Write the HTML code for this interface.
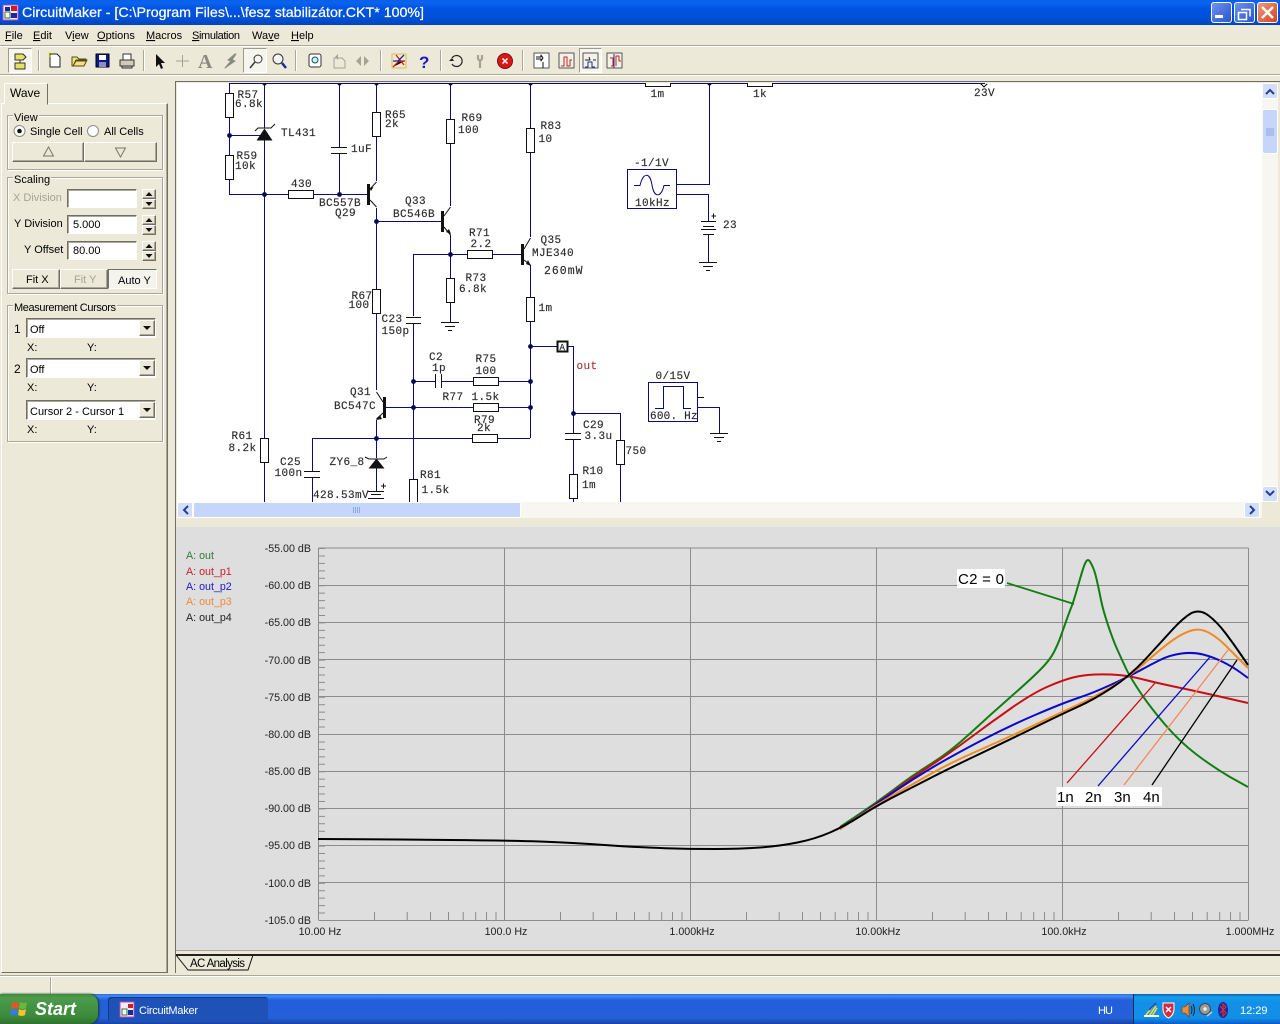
<!DOCTYPE html>
<html><head><meta charset="utf-8"><title>CircuitMaker</title>
<style>
html,body{margin:0;padding:0;width:1280px;height:1024px;overflow:hidden;background:#ece9d8}
.b{position:absolute;box-sizing:border-box}
.grp{border:1px solid #aca899;box-shadow:1px 1px 0 #fff,inset 1px 1px 0 #fff}
.btn{background:#ece9d8;border:1px solid;border-color:#fff #716f64 #716f64 #fff;box-shadow:inset -1px -1px 0 #aca899}
.inp{background:#fff;border:1px solid;border-color:#716f64 #fff #fff #716f64;box-shadow:inset 1px 1px 0 #aca899}
svg{position:absolute;left:0;top:0}
text{font-family:"Liberation Sans",sans-serif;font-size:11px;fill:#000;white-space:pre}
.m text{font-family:"Liberation Mono",monospace;font-size:11px;letter-spacing:.4px;fill:#2a2a2a;stroke:#2a2a2a;stroke-width:.15}
.w{fill:none;stroke:#0b0b80;stroke-width:1;shape-rendering:crispEdges}
.k{fill:none;stroke:#111;stroke-width:1;shape-rendering:crispEdges}
.r{fill:#fff;stroke:#111;stroke-width:1;shape-rendering:crispEdges}
.c{fill:none;stroke-width:2;stroke-linejoin:round}
.a{fill:none;stroke-width:1.3}
.g text{font-size:10.7px;fill:#222}
.gy{fill:#a5a397}
</style></head><body>

<!-- Title bar -->
<div class="b" style="left:0;top:0;width:1280px;height:25px;background:linear-gradient(#0a5fe8 0,#0a63ee 3px,#0054e3 8px,#0050d8 18px,#0046c0 24px)"></div>
<!-- Window buttons -->
<div class="b" style="left:1211px;top:2px;width:21px;height:21px;border:1px solid #fff;border-radius:3px;background:linear-gradient(135deg,#6d92f0,#2a55cf)"></div>
<div class="b" style="left:1234px;top:2px;width:21px;height:21px;border:1px solid #fff;border-radius:3px;background:linear-gradient(135deg,#6d92f0,#2a55cf)"></div>
<div class="b" style="left:1257px;top:2px;width:21px;height:21px;border:1px solid #fff;border-radius:3px;background:linear-gradient(135deg,#ee9a7c,#d5431a)"></div>

<!-- Menu / toolbar separators -->
<div class="b" style="left:0;top:45px;width:1280px;height:1px;background:#aca899"></div>
<div class="b" style="left:0;top:46px;width:1280px;height:1px;background:#fff"></div>
<div class="b" style="left:0;top:74px;width:1280px;height:1px;background:#aca899"></div>
<div class="b" style="left:0;top:75px;width:1280px;height:1px;background:#fff"></div>
<!-- pressed toolbar buttons -->
<div class="b" style="left:8px;top:48px;width:24px;height:25px;background:#f6f5ee;border:1px solid;border-color:#9d9b90 #fff #fff #9d9b90"></div>
<div class="b" style="left:243px;top:48px;width:24px;height:25px;background:#f6f5ee;border:1px solid;border-color:#9d9b90 #fff #fff #9d9b90"></div>
<div class="b" style="left:579px;top:48px;width:23px;height:25px;background:#f6f5ee;border:1px solid;border-color:#9d9b90 #fff #fff #9d9b90"></div>

<!-- Left panel -->
<div class="b" style="left:1px;top:103px;width:167px;height:870px;border:1px solid;border-color:#fff #716f64 #716f64 #fff;box-shadow:inset -1px 0 0 #aca899"></div>
<div class="b" style="left:4px;top:83px;width:44px;height:22px;background:#ece9d8;border:1px solid;border-color:#fff #716f64 #ece9d8 #fff;border-radius:2px 2px 0 0"></div>

<div class="b grp" style="left:7px;top:115px;width:156px;height:55px"></div>
<div class="b grp" style="left:7px;top:177px;width:156px;height:117px"></div>
<div class="b grp" style="left:7px;top:305px;width:156px;height:137px"></div>
<div class="b" style="left:13px;top:112px;width:26px;height:10px;background:#ece9d8"></div>
<div class="b" style="left:13px;top:174px;width:38px;height:10px;background:#ece9d8"></div>
<div class="b" style="left:13px;top:302px;width:104px;height:10px;background:#ece9d8"></div>

<div class="b btn" style="left:12px;top:142px;width:72px;height:20px"></div>
<div class="b btn" style="left:84px;top:142px;width:73px;height:20px"></div>

<div class="b inp" style="left:67px;top:189px;width:70px;height:19px"></div>
<div class="b inp" style="left:67px;top:215px;width:70px;height:19px"></div>
<div class="b inp" style="left:67px;top:241px;width:70px;height:19px"></div>
<div class="b btn" style="left:142px;top:189px;width:14px;height:10px"></div><div class="b btn" style="left:142px;top:199px;width:14px;height:10px"></div>
<div class="b btn" style="left:142px;top:215px;width:14px;height:10px"></div><div class="b btn" style="left:142px;top:225px;width:14px;height:10px"></div>
<div class="b btn" style="left:142px;top:241px;width:14px;height:10px"></div><div class="b btn" style="left:142px;top:251px;width:14px;height:10px"></div>

<div class="b btn" style="left:12px;top:269px;width:48px;height:20px"></div>
<div class="b btn" style="left:60px;top:269px;width:48px;height:20px"></div>
<div class="b" style="left:108px;top:269px;width:49px;height:20px;background:#f4f3ec;border:1px solid;border-color:#716f64 #fff #fff #716f64"></div>

<div class="b inp" style="left:26px;top:318px;width:130px;height:20px"></div>
<div class="b inp" style="left:26px;top:358px;width:130px;height:20px"></div>
<div class="b inp" style="left:26px;top:400px;width:130px;height:20px"></div>
<div class="b btn" style="left:139px;top:320px;width:16px;height:16px"></div>
<div class="b btn" style="left:139px;top:360px;width:16px;height:16px"></div>
<div class="b btn" style="left:139px;top:402px;width:16px;height:16px"></div>

<!-- Schematic area -->
<div class="b" style="left:175px;top:81px;width:1105px;height:446px;border-left:1px solid #716f64;border-top:1px solid #716f64"></div>
<div class="b" style="left:177px;top:83px;width:1085px;height:419px;background:#fff"></div>
<!-- V scroll -->
<div class="b" style="left:1262px;top:83px;width:16px;height:419px;background:#f7f6f0"></div>
<div class="b" style="left:1262px;top:83px;width:16px;height:16px;background:#d3dff9;border:1px solid #fff;border-radius:2px"></div>
<div class="b" style="left:1262px;top:109px;width:16px;height:45px;background:#c6d6fb;border:1px solid #fff;border-radius:2px"></div>
<div class="b" style="left:1262px;top:486px;width:16px;height:16px;background:#d3dff9;border:1px solid #fff;border-radius:2px"></div>
<!-- H scroll -->
<div class="b" style="left:177px;top:502px;width:1085px;height:16px;background:#f7f6f0"></div>
<div class="b" style="left:177px;top:502px;width:16px;height:16px;background:#d3dff9;border:1px solid #fff;border-radius:2px"></div>
<div class="b" style="left:193px;top:502px;width:328px;height:16px;background:#c6d6fb;border:1px solid #fff;border-radius:2px"></div>
<div class="b" style="left:1244px;top:502px;width:16px;height:16px;background:#d3dff9;border:1px solid #fff;border-radius:2px"></div>
<div class="b" style="left:1262px;top:502px;width:16px;height:16px;background:#ece9d8"></div>

<!-- Graph background -->
<div class="b" style="left:175px;top:518px;width:1px;height:455px;background:#716f64"></div>
<div class="b" style="left:176px;top:527px;width:1104px;height:423px;background:#dedede"></div>
<div class="b" style="left:176px;top:950px;width:1104px;height:1px;background:#aca899"></div>
<div class="b" style="left:176px;top:954px;width:1104px;height:2px;background:#222"></div>
<div class="b" style="left:0;top:975px;width:1280px;height:1px;background:#aca899"></div>
<div class="b" style="left:0;top:976px;width:1280px;height:1px;background:#fff"></div>
<div class="b" style="left:50px;top:977px;width:2px;height:17px;background:linear-gradient(90deg,#aca899 50%,#fff 50%)"></div>

<!-- Taskbar -->
<div class="b" style="left:0;top:994px;width:1280px;height:30px;background:linear-gradient(#2a69e0 0,#3f8cf3 2px,#245edb 6px,#2460d8 24px,#1941a5 30px)"></div>
<div class="b" style="left:0;top:994px;width:98px;height:30px;background:linear-gradient(#3f8a3f,#4c9c4c 4px,#3c8a3c 22px,#2f722f);border-radius:0 10px 10px 0;box-shadow:1px 0 2px #123a12"></div>
<div class="b" style="left:108px;top:997px;width:160px;height:25px;background:#1e52b7;border-radius:3px;box-shadow:inset 1px 1px 0 #123a8a"></div>
<div class="b" style="left:1133px;top:994px;width:147px;height:30px;background:linear-gradient(#0c59b9,#139ee9 3px,#1290e8 8px,#1290e8 24px,#095bc9);border-left:1px solid #092e51"></div>

<svg width="1280" height="1024" viewBox="0 0 1280 1024" xmlns="http://www.w3.org/2000/svg">
<defs>
<clipPath id="sc"><rect x="177" y="83" width="1085" height="419"/></clipPath>
<g id="tk"><path d="M56 912v8M88.7 912v8M112 912v8M130 912v8M144.7 912v8M157.2 912v8M168 912v8M177.5 912v8" stroke="#8c8c8c" fill="none"/></g>
<g id="gnd"><path d="M-9 0H9M-5 4H5M-2 8H2" class="k"/></g>
</defs>

<!-- Title -->
<rect x="3" y="5" width="15" height="15" fill="#f4e9f6" stroke="#b74bb7"/>
<rect x="5" y="12" width="5" height="6" fill="#fff" stroke="#2a7a2a"/><rect x="11" y="6" width="6" height="5" fill="#cc2020"/><rect x="11" y="13" width="6" height="5" fill="#1a2a9a"/><rect x="5" y="7" width="5" height="4" fill="#1a2a9a"/>
<text x="22" y="17" style="font-size:14px;fill:#fff;stroke:#fff;stroke-width:.25" textLength="402" lengthAdjust="spacingAndGlyphs">CircuitMaker - [C:\Program Files\...\fesz stabilizátor.CKT* 100%]</text>
<rect x="1215" y="15" width="8" height="3" fill="#fff"/>
<path d="M1241 9.5h9v7M1238.5 12.5h8v7h-8z" fill="none" stroke="#fff" stroke-width="1.5"/>
<path d="M1262 7l11 11M1273 7l-11 11" stroke="#fff" stroke-width="2.4"/>

<!-- Menu -->
<g style="fill:#000">
<text x="5" y="39"><tspan text-decoration="underline">F</tspan>ile</text>
<text x="33" y="39"><tspan text-decoration="underline">E</tspan>dit</text>
<text x="65" y="39">V<tspan text-decoration="underline">i</tspan>ew</text>
<text x="97" y="39"><tspan text-decoration="underline">O</tspan>ptions</text>
<text x="146" y="39"><tspan text-decoration="underline">M</tspan>acros</text>
<text x="192" y="39" textLength="48"><tspan text-decoration="underline">S</tspan>imulation</text>
<text x="252" y="39">Wa<tspan text-decoration="underline">v</tspan>e</text>
<text x="291" y="39"><tspan text-decoration="underline">H</tspan>elp</text>
</g>

<!-- Toolbar separators -->
<path d="M38.5 50v21M143.5 50v21M295.5 50v21M380.5 50v21M440.5 50v21M522.5 50v21" stroke="#aca899"/>
<path d="M39.5 50v21M144.5 50v21M296.5 50v21M381.5 50v21M441.5 50v21M523.5 50v21" stroke="#fff"/>
<!-- Toolbar icons -->
<g stroke-linejoin="round">
<path d="M15 54h8l3 3-3 3h-8zM15 63h10v6H15z" fill="#e8e060" stroke="#333"/><path d="M20 60v3" stroke="#333"/>
<path d="M50 54h7l3 3v10H50z" fill="#fff" stroke="#222"/><path d="M48 53h3M48 56h3" stroke="#ee0"/>
<path d="M72 66v-9h5l2 2h7v2H76l-3 5zM73 66l3-6h11l-3 6z" fill="#f3e187" stroke="#554c14"/>
<rect x="96" y="54" width="13" height="13" fill="#0a1a88" stroke="#001"/><rect x="99" y="55" width="7" height="5" fill="#fff"/><rect x="99" y="62" width="7" height="5" fill="#8a8fc0"/>
<path d="M123 54h8v6h-8z" fill="#fff" stroke="#333"/><path d="M120 60h14v6h-14zM122 66h10v2h-10z" fill="#cfcbb8" stroke="#333"/>
<path d="M156 54l0 13 3-3 2 5 2-1-2-5h4z" fill="#111"/>
<path d="M182.5 55v12M176 61h13" stroke="#a5a397"/>
<text x="198" y="68" style="font-family:'Liberation Serif',serif;font-size:20px;fill:#8a8a80;font-weight:bold">A</text>
<path d="M235 54l-7 6 3 1-6 7 10-7-3-1 4-6z" fill="#8a8a80" stroke="#8a8a80"/>
<circle cx="258" cy="59" r="4" fill="none" stroke="#333"/><path d="M255 62l-5 6" stroke="#333" stroke-width="1.4"/>
<circle cx="278" cy="59" r="5" fill="#f4f4f4" stroke="#333"/><path d="M282 63l4 5" stroke="#1a2a9a" stroke-width="2.4"/>
<rect x="309" y="54" width="12" height="13" rx="2" fill="#fff" stroke="#333"/><circle cx="315" cy="60" r="3" fill="#bfe" stroke="#246"/>
<path d="M334 58h8l3 3v7h-11z" fill="none" stroke="#a5a397"/><path d="M335 57l3-3v6z" fill="#a5a397"/>
<path d="M361 56l-5 5 5 5zM364 56l5 5-5 5z" fill="#a5a397"/>
<rect x="392" y="54" width="14" height="14" fill="none" stroke="#d8c050"/><path d="M393 67l6-6h6M396 55l8 10" stroke="#cc2020" stroke-width="1.3"/><path d="M393 61h5l6-6" stroke="#1a2a9a" stroke-width="1.3" fill="none"/>
<text x="419" y="68" style="font-size:17px;font-weight:bold;fill:#1a1ac0">?</text>
<path d="M452 58a5.5 5.5 0 1 1 0 6" fill="none" stroke="#222" stroke-width="1.2"/><path d="M449 61h5l-2 -3z" fill="#222"/>
<path d="M478 55v4l2 2 2-2v-4M480 61v7" stroke="#a5a397" stroke-width="2.2" fill="none"/>
<circle cx="505" cy="61" r="7.5" fill="#d81818" stroke="#7a1010"/><path d="M502.5 58.5l5 5M507.5 58.5l-5 5" stroke="#fff" stroke-width="1.5"/>
<g fill="#fff" stroke="#555"><rect x="534" y="53" width="15" height="15"/><rect x="559" y="53" width="15" height="15" fill="#f4f2e8"/><rect x="583" y="53" width="15" height="15" fill="#f4f2e8"/><rect x="607" y="53" width="15" height="15" fill="#f4f2e8"/></g>
<path d="M536 57h5v-2l2 3-2 3v-2h-5M543 62v6" stroke="#111" fill="none"/>
<path d="M561 66h3v-9h3v9h3v-6h2" stroke="#c02020" fill="none"/><path d="M585 60h5l-1-3M593 60h3" stroke="#222" fill="none"/><path d="M585 67h3v-5h4v5h3" stroke="#1a2a9a" fill="none"/>
<path d="M610 58h3v8h-2M616 66v-10h3v5h2" stroke="#c02020" fill="none"/><path d="M614 54v14" stroke="#1a2a9a"/>
</g>

<!-- Panel text -->
<text x="10" y="97" style="font-size:12px">Wave</text>
<text x="14" y="121">View</text>
<circle cx="19.5" cy="131" r="5.5" fill="#fff" stroke="#8a8a80"/><circle cx="19.5" cy="131" r="2.3" fill="#111"/>
<text x="30" y="135">Single Cell</text>
<circle cx="93" cy="131" r="5.5" fill="#fff" stroke="#8a8a80"/>
<text x="104" y="135">All Cells</text>
<path d="M48.5 147l-5 9h10zM120.5 157l-5-9h10z" fill="none" stroke="#77756a"/>
<text x="14" y="183">Scaling</text>
<text x="13" y="201" class="gy">X Division</text>
<text x="14" y="227">Y Division</text>
<text x="24" y="253">Y Offset</text>
<text x="73" y="228">5.000</text>
<text x="73" y="254">80.00</text>
<path d="M149 192l-3.500 4h7zM149 206l-3.500-4h7zM149 218l-3.500 4h7zM149 232l-3.500-4h7zM149 244l-3.500 4h7zM149 258l-3.500-4h7z" fill="#111"/>
<text x="26" y="283">Fit X</text>
<text x="74" y="283" class="gy">Fit Y</text>
<text x="118" y="284">Auto Y</text>
<text x="14" y="311" textLength="102">Measurement Cursors</text>
<text x="14" y="333" style="font-size:12px">1</text>
<text x="30" y="333">Off</text>
<text x="27" y="351" fill="#333">X:</text><text x="87" y="351">Y:</text>
<text x="14" y="373" style="font-size:12px">2</text>
<text x="30" y="373">Off</text>
<text x="27" y="391">X:</text><text x="87" y="391">Y:</text>
<text x="30" y="415">Cursor 2 - Cursor 1</text>
<text x="27" y="433">X:</text><text x="87" y="433">Y:</text>
<path d="M143 326h8l-4 4zM143 366h8l-4 4zM143 408h8l-4 4z" fill="#111"/>

<!-- Scrollbar glyphs -->
<path d="M1266 94l4-4 4 4M1266 491l4 4 4-4M188 506l-4 4 4 4M1250 506l4 4-4 4" fill="none" stroke="#20409a" stroke-width="2"/>
<path d="M353.500 507v6M355.500 507v6M357.500 507v6M359.500 507v6" stroke="#8ea8e0"/>
<path d="M1266 129h8M1266 131h8M1266 133h8M1266 135h8" stroke="#8ea8e0"/>

<!-- Schematic -->
<g clip-path="url(#sc)" class="m">
<rect x="229" y="82" width="757" height="1" fill="#9a9a9a"/>
<path class="w" d="M229 83.500H985"/>
<path class="w" d="M229.500 83V93M229.500 117V155M229.500 179V194.500M229 135.500H264M229 194.500H288M313 194.500H367
M264.500 83V128M264.500 140V438M264.500 462V502
M339.500 83V147M339.500 153V194
M376.500 83V112M376.500 137V181M376.500 208V289M376.500 313V390M376.500 420V458M376.500 468V491
M376 221.500H441
M450.500 83V119M450.500 143V206M450.500 235V278M450.500 302V322
M413 254.500H467M492 254.500H521
M413.500 254V316M413.500 323V479
M530.500 83V128M530.500 152V237M530.500 265V297M530.500 321V438
M530 346.500H558M568 346.500H573.500M573.500 346V433M573.500 439V474M573.500 498V502
M573 413.500H620M620.500 413V440M620.500 465V502
M413 381.500H435M441 381.500H473M498 381.500H530
M386 407.500H473M498 407.500H530
M312 438.500H472M497 438.500H530
M312.500 438V471M312.500 477V502
M709.500 83V184.500H677M677 194.500H708.500V221M708.500 234V262
M698 407.500H719.500V433"/>
<path class="k" d="M698 397.500H704"/>
<!-- resistors -->
<rect class="r" x="225.500" y="93.500" width="8" height="24"/>
<rect class="r" x="225.500" y="155.500" width="8" height="24"/>
<rect class="r" x="288.500" y="190.500" width="25" height="8"/>
<rect class="r" x="372.500" y="112.500" width="8" height="24"/>
<rect class="r" x="446.500" y="119.500" width="8" height="24"/>
<rect class="r" x="526.500" y="128.500" width="8" height="24"/>
<rect class="r" x="467.500" y="250.500" width="25" height="8"/>
<rect class="r" x="446.500" y="278.500" width="8" height="24"/>
<rect class="r" x="526.500" y="297.500" width="8" height="24"/>
<rect class="r" x="372.500" y="289.500" width="8" height="24"/>
<rect class="r" x="473.500" y="377.500" width="25" height="8"/>
<rect class="r" x="473.500" y="403.500" width="25" height="8"/>
<rect class="r" x="472.500" y="434.500" width="25" height="8"/>
<rect class="r" x="260.500" y="438.500" width="8" height="24"/>
<rect class="r" x="409.500" y="479.500" width="8" height="24"/>
<rect class="r" x="569.500" y="474.500" width="8" height="24"/>
<rect class="r" x="616.500" y="440.500" width="8" height="24"/>
<rect class="r" x="645.500" y="80.500" width="25" height="6"/>
<rect class="r" x="747.500" y="80.500" width="25" height="6"/>
<path class="k" d="M981 84l3 3 3-3"/>
<!-- capacitors -->
<path class="k" d="M331 147.500H347M331 153.500H347M406 317.500H421M406 323.500H421M435.500 374V388M441.500 374V388M565 433.500H581M565 439.500H581M304 471.500H320M304 477.500H320"/>
<!-- transistors -->
<rect x="367" y="184" width="3" height="21" fill="#111"/>
<path d="M370 189l6.500-7" stroke="#111" fill="none"/><path d="M370 200l6.500 7" stroke="#111" fill="none"/><path d="M369.500 188l4-1-2.500 4z" fill="#111"/>
<rect x="441" y="211" width="3" height="21" fill="#111"/>
<path d="M444 216l6.500-9M444 227l6.500 8" stroke="#111" fill="none"/><path d="M451 234l-5-2 3-3z" fill="#111"/>
<rect x="521" y="244" width="3" height="21" fill="#111"/>
<path d="M524 249l6.500-11M524 260l6.500 5" stroke="#111" fill="none"/><path d="M531 266l-5-2 2-4z" fill="#111"/>
<rect x="383" y="397" width="3" height="21" fill="#111"/>
<path d="M383 402l-6.500-10M383 413l-6.500 6" stroke="#111" fill="none"/><path d="M376 420l4-5 2 4z" fill="#111"/>
<!-- TL431, zener -->
<path d="M256.500 140.500h16l-8-12z" fill="#111"/><path d="M255 131l3-3h13l4-4" stroke="#111" fill="none"/>
<path d="M368.500 468.500h16l-8-10z" fill="#111"/><path d="M365 457l4 2h15l3-2" stroke="#111" fill="none"/>
<!-- batteries -->
<path class="k" d="M368 491.500H384M371 494.500H381M368 498.500H384M701 221.500H716M703 226.500H714M701 229.500H716M703 234.500H714M381 486H386M383.500 483.500V488.500M711.500 216H716M713.500 213.500V218.500"/>
<use href="#gnd" x="450" y="322.500"/><use href="#gnd" x="708" y="262.500"/><use href="#gnd" x="719" y="433.500"/>
<!-- nodes -->
<g fill="#0a0a50"><circle cx="229.500" cy="135.500" r="2.400"/><circle cx="264.500" cy="194.500" r="2.400"/><circle cx="339.500" cy="194.500" r="2.400"/><circle cx="376.500" cy="221.500" r="2.400"/><circle cx="450.500" cy="254.500" r="2.400"/><circle cx="530.500" cy="346.500" r="2.400"/><circle cx="530.500" cy="381.500" r="2.400"/><circle cx="530.500" cy="407.500" r="2.400"/><circle cx="413.500" cy="381.500" r="2.400"/><circle cx="413.500" cy="407.500" r="2.400"/><circle cx="376.500" cy="438.500" r="2.400"/><circle cx="573.500" cy="413.500" r="2.400"/>
<circle cx="264.500" cy="83.500" r="2"/><circle cx="339.500" cy="83.500" r="2"/><circle cx="376.500" cy="83.500" r="2"/><circle cx="450.500" cy="83.500" r="2"/><circle cx="530.500" cy="83.500" r="2"/><circle cx="709.500" cy="83.500" r="2"/></g>
<!-- probe -->
<rect x="557.500" y="341.500" width="10" height="10" fill="#fff" stroke="#111" stroke-width="2"/>
<text x="559.500" y="350" style="font-size:9px;letter-spacing:0">A</text>
<!-- sources -->
<rect class="k" x="627.500" y="169.500" width="49" height="39" style="stroke:#0b0b80"/>
<path d="M634 185.500H640C643 172 650 172 652 185C654 198 661 198 664 185.500H670" fill="none" stroke="#0b0b80"/>
<rect class="k" x="648.500" y="382.500" width="49" height="39" style="stroke:#0b0b80"/>
<path class="w" d="M655 408.500H663.500V386.500H683.500V408.500H691"/>
<!-- labels -->
<text x="237.500" y="98">R57</text><text x="235" y="107">6.8k</text>
<text x="281" y="136">TL431</text>
<text x="385" y="118">R65</text><text x="385" y="127">2k</text>
<text x="461.500" y="121">R69</text><text x="458" y="133">100</text>
<text x="351" y="152">1uF</text>
<text x="236.500" y="159">R59</text><text x="235" y="169">10k</text>
<text x="291" y="187">430</text>
<text x="319" y="206">BC557B</text><text x="335" y="216">Q29</text>
<text x="405" y="204">Q33</text><text x="393" y="217">BC546B</text>
<text x="540.500" y="129">R83</text><text x="538.500" y="142">10</text>
<text x="469" y="236">R71</text><text x="470.500" y="247">2.2</text>
<text x="540.500" y="243">Q35</text><text x="532" y="256">MJE340</text>
<text x="544" y="274" style="font-size:11.500px;letter-spacing:1px">260mW</text>
<text x="465.500" y="281">R73</text><text x="459" y="292">6.8k</text>
<text x="351.500" y="299">R67</text><text x="348.500" y="308">100</text>
<text x="381.500" y="322">C23</text><text x="381.500" y="334">150p</text>
<text x="429" y="360">C2</text><text x="432" y="371">1p</text>
<text x="475.500" y="362">R75</text><text x="475.500" y="374">100</text>
<text x="442.500" y="400">R77</text><text x="471.500" y="400">1.5k</text>
<text x="474" y="423">R79</text><text x="477" y="431">2k</text>
<text x="350" y="395">Q31</text><text x="334" y="409">BC547C</text>
<text x="231.500" y="439">R61</text><text x="228.500" y="451">8.2k</text>
<text x="280" y="465">C25</text><text x="274.500" y="476">100n</text>
<text x="329.500" y="465">ZY6_8</text>
<text x="313" y="498">428.53mV</text>
<text x="420" y="478">R81</text><text x="421.500" y="493">1.5k</text>
<text x="576.500" y="369" style="fill:#a33;stroke:#a33">out</text>
<text x="583" y="428">C29</text><text x="584.500" y="439">3.3u</text>
<text x="625.500" y="454">750</text>
<text x="582.500" y="474">R10</text><text x="582" y="488">1m</text>
<text x="538.500" y="311">1m</text>
<text x="634" y="166">-1/1V</text><text x="635" y="206">10kHz</text>
<text x="655.500" y="379">0/15V</text><text x="650" y="419" textLength="48">600. Hz</text>
<text x="723" y="228">23</text>
<text x="650.500" y="97">1m</text><text x="753" y="97">1k</text><text x="974" y="96">23V</text>
</g>

<!-- Graph grid -->
<path d="M318.500 548H1248.500M318.500 585.500H1248.500M318.500 622.500H1248.500M318.500 659.500H1248.500M318.500 696.500H1248.500M318.500 734.500H1248.500M318.500 771.500H1248.500M318.500 808.500H1248.500M318.500 845.500H1248.500M318.500 882.500H1248.500M318.500 920.500H1248.500M318.500 548V920M504.500 548V920M690.500 548V920M876.500 548V920M1062.500 548V920M1248.500 548V920" stroke="#8c8c8c" fill="none" shape-rendering="crispEdges"/>
<path d="M322 548V920" stroke="#8c8c8c" stroke-width="6" stroke-dasharray="1 6.440" fill="none"/>
<use href="#tk" x="318.500"/><use href="#tk" x="504.500"/><use href="#tk" x="690.500"/><use href="#tk" x="876.500"/><use href="#tk" x="1062.500"/>

<!-- Graph labels -->
<g class="g">
<text x="186" y="559" style="fill:#2f7f2f">A: out</text>
<text x="186" y="575" style="fill:#c8202a">A: out_p1</text>
<text x="186" y="590" style="fill:#1a1ac8">A: out_p2</text>
<text x="186" y="605" style="fill:#ee8a3a">A: out_p3</text>
<text x="186" y="621" style="fill:#222">A: out_p4</text>
<g text-anchor="end">
<text x="311" y="552">-55.00 dB</text><text x="311" y="589">-60.00 dB</text><text x="311" y="626">-65.00 dB</text><text x="311" y="664">-70.00 dB</text><text x="311" y="701">-75.00 dB</text><text x="311" y="738">-80.00 dB</text><text x="311" y="775">-85.00 dB</text><text x="311" y="812">-90.00 dB</text><text x="311" y="849">-95.00 dB</text><text x="311" y="887">-100.0 dB</text><text x="311" y="924">-105.0 dB</text>
</g>
<g text-anchor="middle">
<text x="320" y="935">10.00 Hz</text><text x="506" y="935">100.0 Hz</text><text x="692" y="935">1.000kHz</text><text x="878" y="935">10.00kHz</text><text x="1064" y="935">100.0kHz</text><text x="1250" y="935">1.000MHz</text>
</g>
</g>

<!-- Curves -->
<path class="c" stroke="#0f7f0f" d="M840 827L858 815Q876 803 894.500 789Q913 775 931.500 763.500Q950 752 970 733.500Q990 715 1010 697.500Q1030 680 1040 670Q1050 660 1054 652Q1058 644 1060.500 637Q1063 630 1066 621.500Q1069 613 1071 608Q1073 603 1075.500 594.500Q1078 586 1080 579Q1082 572 1083.500 567.500Q1085 563 1086.500 561Q1088 559 1089.500 561Q1091 563 1093 567.500Q1095 572 1097 581Q1099 590 1101 600Q1103 610 1108 625Q1113 640 1117.500 650Q1122 660 1126 668.500Q1130 677 1140 692Q1150 707 1165 724.500Q1180 742 1196.500 754.500Q1213 767 1230 777L1248 787"/>
<path class="c" stroke="#c80f14" d="M840 829L858 816.500Q876 804 894.500 790.500Q913 777 931.500 765Q950 753 970 738Q990 723 1011.500 708Q1033 693 1048 686.500Q1063 680 1073 677.500Q1083 675 1095 674.500Q1107 674 1118.500 675Q1130 676 1143.500 679.500Q1157 683 1178.500 687.500Q1200 692 1224 697.500L1248 703"/>
<path class="c" stroke="#0a0ac8" d="M840 829L858 816.500Q876 804 894.500 791.500Q913 779 931.500 768Q950 757 978.500 742Q1007 727 1035 715Q1063 703 1078 698Q1093 693 1111.500 684.500Q1130 676 1140 670.500Q1150 665 1160 660Q1170 655 1181.500 653.500Q1193 652 1203 654.500Q1213 657 1223 662Q1233 667 1240.500 672.500L1248 678"/>
<path class="c" stroke="#f08c1e" d="M840 829L858 817Q876 805 894.500 794.500Q913 784 931.500 773.500Q950 763 978.500 750.500Q1007 738 1034.500 725Q1062 712 1077.500 705Q1093 698 1111.500 687Q1130 676 1146.500 661.500Q1163 647 1173 640Q1183 633 1191.500 630.500Q1200 628 1208.500 632.500Q1217 637 1225 645Q1233 653 1240.500 660.500L1248 668"/>
<path class="c" stroke="#000" d="M318 839L400 839.500L450 840Q504 840.500 540 841.500Q576 843 608 845.200Q640 847.500 665 848.200Q690 849 715 849Q740 849 760 847.500Q780 846 797.500 842.500Q815 839 830 832.500Q845 826 860.500 816Q876 806 894.500 796.500Q913 787 931.500 777.500Q950 768 978.500 754.500Q1007 741 1034.500 727.500Q1062 714 1077.500 707Q1093 700 1111.500 688Q1130 676 1146.500 658Q1163 640 1173 629Q1183 618 1191.500 613Q1200 609 1208.500 615.500Q1217 622 1225 632.500Q1233 643 1240.500 654L1248 665"/>

<!-- Annotations -->
<path class="a" stroke="#0f7f0f" d="M1007 583L1074 604" style="stroke-width:1.800"/>
<path class="a" stroke="#c80f14" d="M1067 783L1155 683"/>
<path class="a" stroke="#0a0ac8" d="M1098 786L1210 657"/>
<path class="a" stroke="#f5875a" d="M1124 785L1228 650"/>
<path class="a" stroke="#000" d="M1152 785L1237 660"/>
<rect x="957" y="569" width="48" height="19" fill="#fff"/>
<text x="958" y="584" style="font-size:15px" textLength="46">C2 = 0</text>
<rect x="1056.500" y="787" width="105.500" height="19" fill="#fff"/>
<g><text x="1057" y="802" style="font-size:15px">1n</text><text x="1085" y="802" style="font-size:15px">2n</text><text x="1114" y="802" style="font-size:15px">3n</text><text x="1143" y="802" style="font-size:15px">4n</text></g>

<!-- AC tab -->
<path d="M176 956L188 970H248L253 956z" fill="#ece9d8"/>
<path d="M176 955L188 970H248L253 955" fill="none" stroke="#111"/>
<text x="190" y="967" style="font-size:11.500px" textLength="55">AC Analysis</text>

<!-- Taskbar content -->
<g transform="translate(12,1001)"><path d="M0 2q4-2 7 0l-1 6q-3-2-7 0z" fill="#e0562a"/><path d="M8 1q4 2 7 0l-1 6q-3 2-7 0z" fill="#6bb83a"/><path d="M-1 9q4-2 7 0l-1 6q-3-2-7 0z" fill="#3a7ae0"/><path d="M7 8q4 2 7 0l-1 6q-3 2-7 0z" fill="#f2c230"/></g>
<text x="35" y="1015" style="font-size:18px;font-weight:bold;font-style:italic;fill:#fff">Start</text>
<rect x="120" y="1002" width="14" height="15" fill="#f4e9f6" stroke="#b74bb7"/>
<rect x="122" y="1009" width="5" height="6" fill="#fff" stroke="#2a7a2a"/><rect x="128" y="1004" width="5" height="4" fill="#cc2020"/><rect x="128" y="1010" width="5" height="5" fill="#1a2a9a"/>
<text x="139" y="1014" style="fill:#fff" textLength="59">CircuitMaker</text>
<text x="1098" y="1014" style="fill:#fff" textLength="15">HU</text>
<text x="1240" y="1014" style="fill:#fff">12:29</text>
<path d="M1146 1015l8-10M1149 1016l7-10M1152 1016l5-8" stroke-width="1.600" stroke="#e8e040" fill="none"/><path d="M1144 1016h15" stroke="#fff" stroke-width="2"/><path d="M1149 1010l7-7" stroke="#2a40c0" stroke-width="1.500"/>
<path d="M1163 1003h11v7q-1 6-5.500 8q-4.500-2-5.500-8z" fill="#d82a3a" stroke="#fff"/><path d="M1166 1007l5 5M1171 1007l-5 5" stroke="#fff" stroke-width="1.500"/>
<path d="M1182 1007h3l4-4v14l-4-4h-3z" fill="#ee8a3a" stroke="#7a3a10" stroke-width=".6"/><path d="M1191 1006q2 4 0 8M1193 1004q3 6 0 12" stroke="#222" fill="none"/>
<circle cx="1205" cy="1009" r="5.500" fill="#9a9a9a" stroke="#444"/><circle cx="1205" cy="1009" r="1.800" fill="#eee"/><path d="M1207 1016l5-4" stroke="#bcd" stroke-width="1.500"/>
<ellipse cx="1223" cy="1010" rx="5" ry="8" fill="#1a2a9a"/><path d="M1220 1006l6 7-3 3v-12l3 3-6 6" stroke="#e82a2a" stroke-width="1.100" fill="none"/>
</svg>
</body></html>
